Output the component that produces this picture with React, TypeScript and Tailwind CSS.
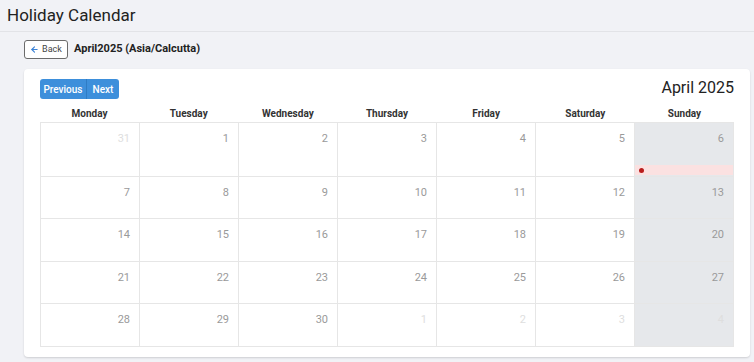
import { ArrowLeft } from 'lucide-react';

const days = ['Monday', 'Tuesday', 'Wednesday', 'Thursday', 'Friday', 'Saturday', 'Sunday'];

type Cell = { day: number; current: boolean };

// April 2025, weeks starting Monday
const weeks: Cell[][] = [
  [{ day: 31, current: false }, 1, 2, 3, 4, 5, 6].map((d) => (typeof d === 'number' ? { day: d, current: true } : d)),
  [7, 8, 9, 10, 11, 12, 13].map((d) => ({ day: d, current: true })),
  [14, 15, 16, 17, 18, 19, 20].map((d) => ({ day: d, current: true })),
  [21, 22, 23, 24, 25, 26, 27].map((d) => ({ day: d, current: true })),
  [
    { day: 28, current: true },
    { day: 29, current: true },
    { day: 30, current: true },
    { day: 1, current: false },
    { day: 2, current: false },
    { day: 3, current: false },
    { day: 4, current: false },
  ],
];

const rowHeights = ['h-[54px]', 'h-[42px]', 'h-[43px]', 'h-[42px]', 'h-[43px]'];

export default function App() {
  return (
    <div className="min-h-screen bg-[#f1f2f6] font-['Roboto',sans-serif] text-[#222]">
      <header className="flex h-[32px] items-center border-b border-[#e2e3e7] px-[7px]">
        <h1 className="text-[17px] leading-none">Holiday Calendar</h1>
      </header>

      <div className="flex items-center gap-[6px] pl-[24px] pt-[8px]">
        <button className="flex h-[19px] w-[44px] items-center justify-center gap-[3px] rounded-[3px] border border-[#6b6b6b] bg-white text-[9px] text-[#444]">
          <ArrowLeft size={9} strokeWidth={3} className="text-[#3b82d6]" />
          Back
        </button>
        <span className="text-[11px] font-bold">April2025 (Asia/Calcutta)</span>
      </div>

      <div className="ml-[24px] mr-[4px] mt-[10px] rounded-[4px] bg-white px-[16px] pb-[10px] pt-[10px] shadow-[0_1px_2px_rgba(0,0,0,0.15)]">
        <div className="flex items-start justify-between">
          <div className="flex h-[20px] overflow-hidden rounded-[3px] text-[10px] font-medium text-white">
            <button className="w-[46px] bg-[#3d8fdb]">Previous</button>
            <button className="w-[33px] border-l border-[#2f7cc4] bg-[#3d8fdb]">Next</button>
          </div>
          <h2 className="mt-[1px] text-[16px] leading-none text-[#222]">April 2025</h2>
        </div>

        <div className="mt-[6px] grid grid-cols-7">
          {days.map((d) => (
            <div key={d} className="h-[17px] text-center text-[10px] font-bold leading-[17px] text-[#333]">
              {d}
            </div>
          ))}
        </div>

        <div className="border-l border-t border-[#e6e6e6]">
          {weeks.map((week, wi) => (
            <div key={wi} className={`grid grid-cols-7 ${rowHeights[wi]}`}>
              {week.map((cell, ci) => (
                <div
                  key={ci}
                  className={`flex flex-col border-b border-r border-[#e6e6e6] ${ci === 6 ? 'bg-[#e6e8eb]' : 'bg-white'}`}
                >
                  <div
                    className={`pr-[9px] pt-[9px] text-right text-[11px] leading-[14px] ${cell.current ? 'text-[#9a9a9a]' : 'text-[#dedede]'}`}
                  >
                    {cell.day}
                  </div>
                  {wi === 0 && ci === 6 && (
                    <div className="mt-auto mb-[1px] flex h-[10px] items-center bg-[#fbe1e1] pl-[4px]">
                      <span className="h-[5px] w-[5px] rounded-full bg-[#b91c1c]" />
                    </div>
                  )}
                </div>
              ))}
            </div>
          ))}
        </div>
      </div>
    </div>
  );
}
